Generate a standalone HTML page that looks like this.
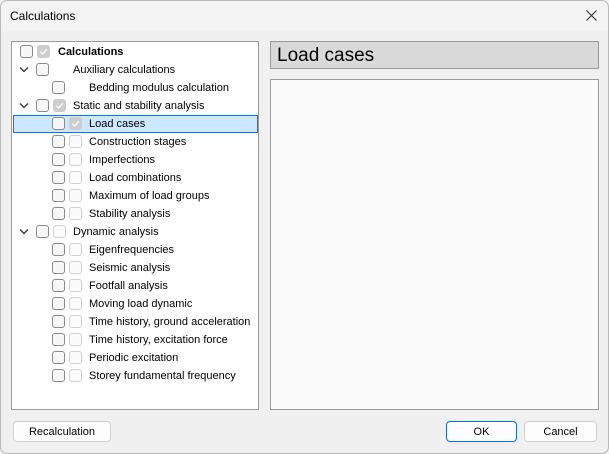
<!DOCTYPE html>
<html><head><style>
*{margin:0;padding:0;box-sizing:border-box}
body{width:609px;height:454px;overflow:hidden;font-family:"Liberation Sans",sans-serif;font-size:11px;color:#000;background:#f0f0f0;position:relative}
.brd{position:absolute;left:0;top:0;width:609px;height:454px;border:1px solid #b9b9b9;border-radius:7px;z-index:9;pointer-events:none}
.tb{position:absolute;left:0;top:0;right:0;height:31px;background:#f3f3f3}
.a{position:absolute;white-space:nowrap}
.cb{position:absolute;width:13px;height:13px;border:1px solid #8a8a8a;border-radius:3px;background:#f7f7f7}
.cg{position:absolute;width:13px;height:13px;border:1px solid #d0d0d0;border-radius:3px;background:#fbfbfb}
.cc{position:absolute;width:13px;height:13px;border-radius:3px;background:#cdcdcd}
.cc svg{position:absolute;left:2px;top:2px}
.btn{position:absolute;height:21px;border:1px solid #d0d0d0;border-radius:4px;background:#fdfdfd;text-align:center;line-height:21px;font-size:11px}
</style></head><body>
<div class="tb"></div>
<div class="brd"></div>
<div class="a" style="left:10px;top:9px;font-size:12px">Calculations</div>
<svg class="a" style="left:586px;top:10px" width="11" height="11"><path d="M0.5 0.5L10.5 10.5M10.5 0.5L0.5 10.5" stroke="#333" stroke-width="1.1"/></svg>
<div class="a" style="left:11px;top:41px;width:248px;height:369px;border:1px solid #9a9a9a;background:#fff"></div>
<div class="a" style="left:13px;top:115px;width:245px;height:18px;border:1px solid #0a78d7;background:#cce8ff"></div>
<div class="a" style="left:270px;top:41px;width:329px;height:28px;border:1px solid #999;background:#d9d9d9"></div>
<div class="a" style="left:277px;top:45px;font-size:19px">Load cases</div>
<div class="a" style="left:270px;top:79px;width:329px;height:331px;border:1px solid #9a9a9a;background:#fafafa"></div>
<div id="t"></div>
<div class="btn" style="left:13px;top:421px;width:98px">Recalculation</div>
<div class="btn" style="left:446px;top:421px;width:71px;border-color:#0a6ed1">OK</div>
<div class="btn" style="left:524px;top:421px;width:73px">Cancel</div>
<script>
var ck='<svg width="9" height="9"><path d="M1.5 4.8L3.7 7L7.8 2.2" stroke="#fff" stroke-width="1.2" fill="none"/></svg>';
var rows=[
[0,'c','Calculations',1],
[1,'n','Auxiliary calculations'],
[2,'x','Bedding modulus calculation'],
[1,'c','Static and stability analysis'],
[2,'c','Load cases'],
[2,'g','Construction stages'],[2,'g','Imperfections'],[2,'g','Load combinations'],[2,'g','Maximum of load groups'],[2,'g','Stability analysis'],
[1,'g','Dynamic analysis'],
[2,'g','Eigenfrequencies'],[2,'g','Seismic analysis'],[2,'g','Footfall analysis'],[2,'g','Moving load dynamic'],[2,'g','Time history, ground acceleration'],[2,'g','Time history, excitation force'],[2,'g','Periodic excitation'],[2,'g','Storey fundamental frequency']];
var h='';
rows.forEach(function(r,i){
 var cy=51+18*i, y=cy-6;
 var x1=[20,36,52][r[0]], tx=[58,73,89][r[0]];
 if(r[0]==1) h+='<svg class="a" style="left:19px;top:'+(cy-3)+'px" width="10" height="7"><path d="M1 1.5L5 5.5L9 1.5" stroke="#333" stroke-width="1.3" fill="none"/></svg>';
 h+='<div class="cb" style="left:'+x1+'px;top:'+y+'px"></div>';
 if(r[1]=='c') h+='<div class="cc" style="left:'+(x1+17)+'px;top:'+y+'px">'+ck+'</div>';
 else if(r[1]=='g') h+='<div class="cg" style="left:'+(x1+17)+'px;top:'+y+'px"></div>';
 h+='<div class="a" style="left:'+tx+'px;top:'+(cy-5)+'px;'+(r[3]?'font-weight:bold;':'')+'">'+r[2]+'</div>';
});
document.getElementById('t').innerHTML=h;
</script>
</body></html>
